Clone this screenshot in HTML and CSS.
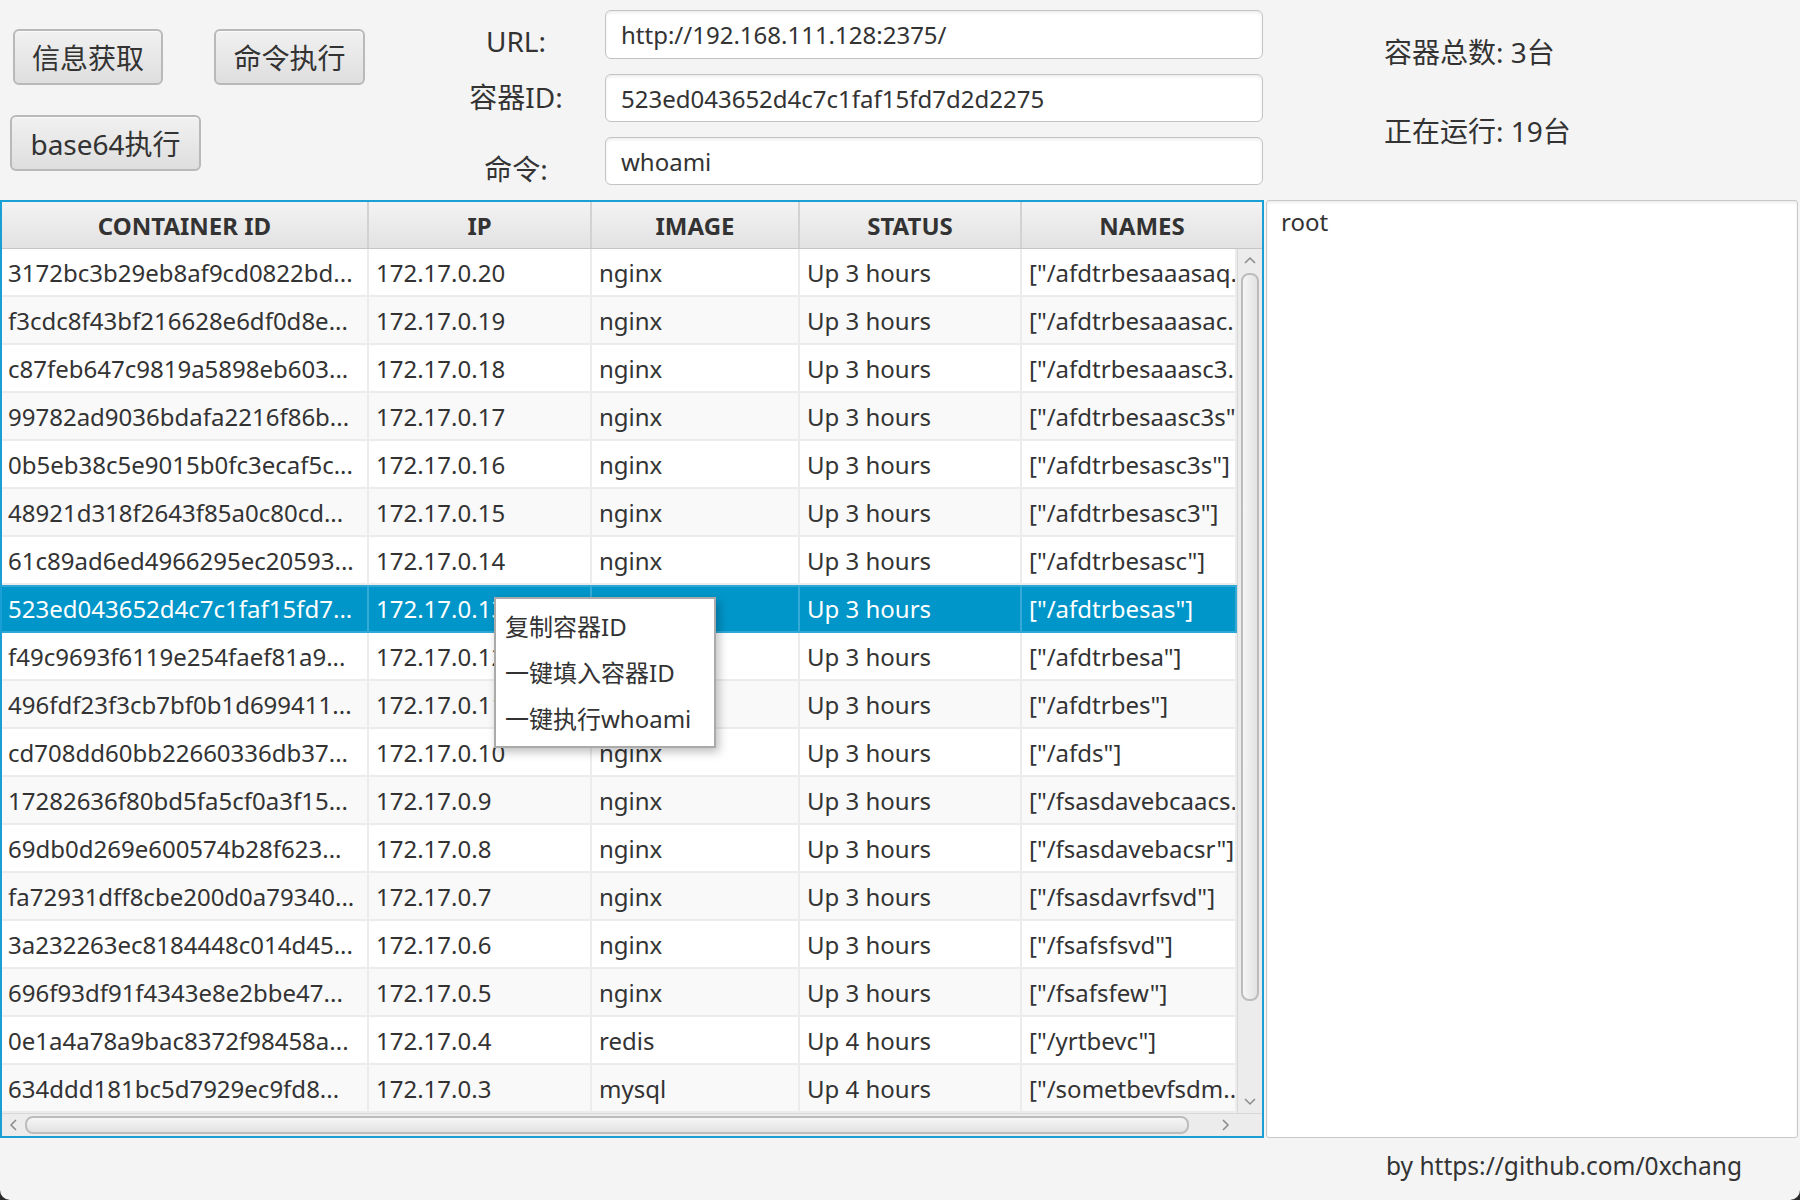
FILE: index.html
```html
<!DOCTYPE html>
<html lang="zh-CN">
<head>
<meta charset="utf-8">
<title>Docker</title>
<link rel="stylesheet" href="styles.css">
</head>
<body>
<div class="app">
  <div class="top">
    <div class="btns">
      <div class="btn-row">
        <div class="btn btn-info">信息获取</div>
        <div class="btn btn-cmd">命令执行</div>
      </div>
      <div class="btn-row second">
        <div class="btn btn-b64">base64执行</div>
      </div>
    </div>
    <div class="labels">
      <div>URL:</div>
      <div>容器ID:</div>
      <div>命令:</div>
    </div>
    <div class="fields">
      <div class="field">http://192.168.111.128:2375/</div>
      <div class="field">523ed043652d4c7c1faf15fd7d2d2275</div>
      <div class="field">whoami</div>
    </div>
    <div class="stats">
      <div>容器总数: 3台</div>
      <div>正在运行: 19台</div>
    </div>
  </div>

  <div class="main">
    <div class="table">
      <div class="thead">
        <div class="th c1">CONTAINER ID</div>
        <div class="th c2">IP</div>
        <div class="th c3">IMAGE</div>
        <div class="th c4">STATUS</div>
        <div class="th c5h">NAMES</div>
      </div>
      <div class="tbody">
        <div class="rows">
          <div class="row"><div class="td">3172bc3b29eb8af9cd0822bd...</div><div class="td">172.17.0.20</div><div class="td">nginx</div><div class="td">Up 3 hours</div><div class="td">["/afdtrbesaaasaq...</div></div>
          <div class="row alt"><div class="td">f3cdc8f43bf216628e6df0d8e...</div><div class="td">172.17.0.19</div><div class="td">nginx</div><div class="td">Up 3 hours</div><div class="td">["/afdtrbesaaasac...</div></div>
          <div class="row"><div class="td">c87feb647c9819a5898eb603...</div><div class="td">172.17.0.18</div><div class="td">nginx</div><div class="td">Up 3 hours</div><div class="td">["/afdtrbesaaasc3...</div></div>
          <div class="row alt"><div class="td">99782ad9036bdafa2216f86b...</div><div class="td">172.17.0.17</div><div class="td">nginx</div><div class="td">Up 3 hours</div><div class="td">["/afdtrbesaasc3s"]</div></div>
          <div class="row"><div class="td">0b5eb38c5e9015b0fc3ecaf5c...</div><div class="td">172.17.0.16</div><div class="td">nginx</div><div class="td">Up 3 hours</div><div class="td">["/afdtrbesasc3s"]</div></div>
          <div class="row alt"><div class="td">48921d318f2643f85a0c80cd...</div><div class="td">172.17.0.15</div><div class="td">nginx</div><div class="td">Up 3 hours</div><div class="td">["/afdtrbesasc3"]</div></div>
          <div class="row"><div class="td">61c89ad6ed4966295ec20593...</div><div class="td">172.17.0.14</div><div class="td">nginx</div><div class="td">Up 3 hours</div><div class="td">["/afdtrbesasc"]</div></div>
          <div class="row sel"><div class="td">523ed043652d4c7c1faf15fd7...</div><div class="td">172.17.0.13</div><div class="td">nginx</div><div class="td">Up 3 hours</div><div class="td">["/afdtrbesas"]</div></div>
          <div class="row"><div class="td">f49c9693f6119e254faef81a9...</div><div class="td">172.17.0.12</div><div class="td">nginx</div><div class="td">Up 3 hours</div><div class="td">["/afdtrbesa"]</div></div>
          <div class="row alt"><div class="td">496fdf23f3cb7bf0b1d699411...</div><div class="td">172.17.0.11</div><div class="td">nginx</div><div class="td">Up 3 hours</div><div class="td">["/afdtrbes"]</div></div>
          <div class="row"><div class="td">cd708dd60bb22660336db37...</div><div class="td">172.17.0.10</div><div class="td">nginx</div><div class="td">Up 3 hours</div><div class="td">["/afds"]</div></div>
          <div class="row alt"><div class="td">17282636f80bd5fa5cf0a3f15...</div><div class="td">172.17.0.9</div><div class="td">nginx</div><div class="td">Up 3 hours</div><div class="td">["/fsasdavebcaacs...</div></div>
          <div class="row"><div class="td">69db0d269e600574b28f623...</div><div class="td">172.17.0.8</div><div class="td">nginx</div><div class="td">Up 3 hours</div><div class="td">["/fsasdavebacsr"]</div></div>
          <div class="row alt"><div class="td">fa72931dff8cbe200d0a79340...</div><div class="td">172.17.0.7</div><div class="td">nginx</div><div class="td">Up 3 hours</div><div class="td">["/fsasdavrfsvd"]</div></div>
          <div class="row"><div class="td">3a232263ec8184448c014d45...</div><div class="td">172.17.0.6</div><div class="td">nginx</div><div class="td">Up 3 hours</div><div class="td">["/fsafsfsvd"]</div></div>
          <div class="row alt"><div class="td">696f93df91f4343e8e2bbe47...</div><div class="td">172.17.0.5</div><div class="td">nginx</div><div class="td">Up 3 hours</div><div class="td">["/fsafsfew"]</div></div>
          <div class="row"><div class="td">0e1a4a78a9bac8372f98458a...</div><div class="td">172.17.0.4</div><div class="td">redis</div><div class="td">Up 4 hours</div><div class="td">["/yrtbevc"]</div></div>
          <div class="row alt"><div class="td">634ddd181bc5d7929ec9fd8...</div><div class="td">172.17.0.3</div><div class="td">mysql</div><div class="td">Up 4 hours</div><div class="td">["/sometbevfsdm...</div></div>
        </div>
        <div class="vbar">
          <div class="arrow"><svg width="12" height="8" viewBox="0 0 12 8"><polyline points="1,7 6,2 11,7" fill="none" stroke="#8a8a8a" stroke-width="1.5"/></svg></div>
          <div class="vthumb"></div>
          <div class="spacer"></div>
          <div class="arrow"><svg width="12" height="8" viewBox="0 0 12 8"><polyline points="1,1 6,6 11,1" fill="none" stroke="#8a8a8a" stroke-width="1.5"/></svg></div>
        </div>
      </div>
      <div class="hfoot">
        <div class="hbar">
          <div class="harrow"><svg width="8" height="12" viewBox="0 0 8 12"><polyline points="7,1 2,6 7,11" fill="none" stroke="#8a8a8a" stroke-width="1.5"/></svg></div>
          <div class="hthumb"></div>
          <div class="spacer"></div>
          <div class="harrow"><svg width="8" height="12" viewBox="0 0 8 12"><polyline points="1,1 6,6 1,11" fill="none" stroke="#8a8a8a" stroke-width="1.5"/></svg></div>
        </div>
        <div class="corner"></div>
      </div>
    </div>
    <div class="out">root</div>
  </div>

  <div class="foot">by https://github.com/0xchang</div>

  <div class="menu">
    <div class="mi">复制容器ID</div>
    <div class="mi">一键填入容器ID</div>
    <div class="mi">一键执行whoami</div>
  </div>
</div>
</body>
</html>
```

FILE: styles.css
```css
html { background: #2a2a2a; }
body { margin: 0; }

.app {
  width: 1800px;
  height: 1200px;
  background: #f4f4f4;
  border-radius: 0 0 10px 10px;
  position: relative;
  overflow: hidden;
  font-family: "Noto Sans", "Noto Sans CJK SC", sans-serif;
  color: #333;
}

/* ---------- top area ---------- */
.top { display: flex; height: 200px; }

.btns { width: 454px; padding-top: 29px; box-sizing: border-box; }
.btn-row { display: flex; gap: 51px; padding-left: 13px; }
.btn-row.second { padding-left: 10px; margin-top: 30px; }

.btn {
  height: 56px;
  box-sizing: border-box;
  border: 2px solid #b9b9b9;
  border-radius: 6px;
  background: linear-gradient(#f1f1f1, #dedede);
  box-shadow: inset 0 1px 0 #fafafa;
  font-size: 28px;
  display: flex;
  align-items: center;
  justify-content: center;
}
.btn-info { width: 150px; }
.btn-cmd { width: 151px; }
.btn-b64 { width: 191px; }

.labels {
  width: 120px;
  padding-top: 21px;
  padding-left: 2px;
  display: grid;
  grid-template-rows: 56px 72px 40px;
  text-align: center;
  font-size: 28px;
  line-height: 40px;
}

.fields {
  width: 658px;
  margin-left: 29px;
  padding-top: 10px;
  display: grid;
  grid-template-rows: 49px 48px 48px;
  row-gap: 15px;
}
.field {
  border: 1px solid #c3c3c3;
  border-radius: 6px;
  background: #fff;
  box-shadow: inset 0 2px 3px rgba(0, 0, 0, 0.07);
  font-size: 24px;
  padding-left: 15px;
  display: flex;
  align-items: center;
}

.stats {
  margin-left: 121px;
  padding-top: 32px;
  font-size: 28px;
  line-height: 40px;
  display: flex;
  flex-direction: column;
  gap: 39px;
}

/* ---------- main ---------- */
.main { display: flex; height: 938px; gap: 2px; }

.table {
  width: 1264px;
  box-sizing: border-box;
  border: 2px solid #1a9fd4;
  display: flex;
  flex-direction: column;
  background: #fff;
}

.thead {
  display: flex;
  height: 47px;
  flex: none;
  background: linear-gradient(#f3f3f3, #e2e2e2);
  border-bottom: 1px solid #c5c5c5;
  box-sizing: border-box;
}
.th {
  font-weight: bold;
  font-size: 24px;
  display: flex;
  align-items: center;
  justify-content: center;
  border-right: 2px solid #d2d2d2;
  box-sizing: border-box;
}
.c1 { width: 367px; }
.c2 { width: 223px; }
.c3 { width: 208px; }
.c4 { width: 222px; }
.c5h { width: 240px; border-right: none; }

.tbody { display: flex; height: 864px; flex: none; }
.rows { width: 1235px; overflow: hidden; }

.row {
  display: grid;
  grid-template-columns: 367px 223px 208px 222px 215px;
  height: 48px;
  box-sizing: border-box;
  border-bottom: 2px solid #ececec;
  background: #fff;
  font-size: 24px;
}
.row.alt { background: #f9f9f9; }
.td {
  padding-left: 7px;
  border-right: 2px solid #ececec;
  white-space: nowrap;
  overflow: hidden;
  display: flex;
  align-items: center;
}
.row .td:first-child { padding-left: 6px; }
.row.sel {
  background: #0096c9;
  color: #fff;
  border-bottom-color: #2ea7d4;
  box-shadow: inset 0 2px 0 #2ea7d4;
}
.row.sel .td { border-right-color: #35aad6; }

.vbar {
  width: 25px;
  background: #ececec;
  border-left: 1px solid #d8d8d8;
  box-sizing: border-box;
  display: flex;
  flex-direction: column;
  align-items: center;
}
.arrow { height: 22px; display: flex; align-items: center; justify-content: center; flex: none; }
.vthumb {
  margin-top: 2px;
  width: 18px;
  height: 728px;
  box-sizing: border-box;
  border: 2px solid #bcbcbc;
  border-radius: 8px;
  background: linear-gradient(to right, #f6f6f6, #e2e2e2);
  flex: none;
}
.spacer { flex: 1; }

.hfoot { display: flex; height: 23px; flex: none; }
.hbar {
  width: 1235px;
  background: #ececec;
  border-top: 1px solid #d8d8d8;
  box-sizing: border-box;
  display: flex;
  align-items: center;
}
.harrow { width: 22px; display: flex; justify-content: center; align-items: center; flex: none; }
.hthumb {
  margin-left: 1px;
  width: 1164px;
  height: 18px;
  box-sizing: border-box;
  border: 2px solid #bcbcbc;
  border-radius: 8px;
  background: linear-gradient(#f6f6f6, #e2e2e2);
  flex: none;
}
.corner { width: 25px; background: #ececec; border-top: 1px solid #d8d8d8; box-sizing: border-box; }

.out {
  width: 532px;
  background: #fff;
  border: 1px solid #c8c8c8;
  border-radius: 3px;
  box-shadow: inset 0 2px 3px rgba(0, 0, 0, 0.07);
  font-size: 24px;
  padding: 4px 14px;
  box-sizing: border-box;
}

/* ---------- footer ---------- */
.foot {
  height: 62px;
  padding-left: 1386px;
  padding-bottom: 8px;
  box-sizing: border-box;
  display: flex;
  align-items: center;
  font-size: 24.5px;
}

/* ---------- context menu ---------- */
.menu {
  position: absolute;
  left: 494px;
  top: 597px;
  width: 222px;
  height: 151px;
  box-sizing: border-box;
  background: #fff;
  border: 2px solid #aaaaaa;
  box-shadow: 3px 4px 9px rgba(0, 0, 0, 0.25);
  padding-top: 5px;
  font-size: 24px;
}
.mi { height: 46px; line-height: 46px; padding-left: 9px; white-space: nowrap; }
```
